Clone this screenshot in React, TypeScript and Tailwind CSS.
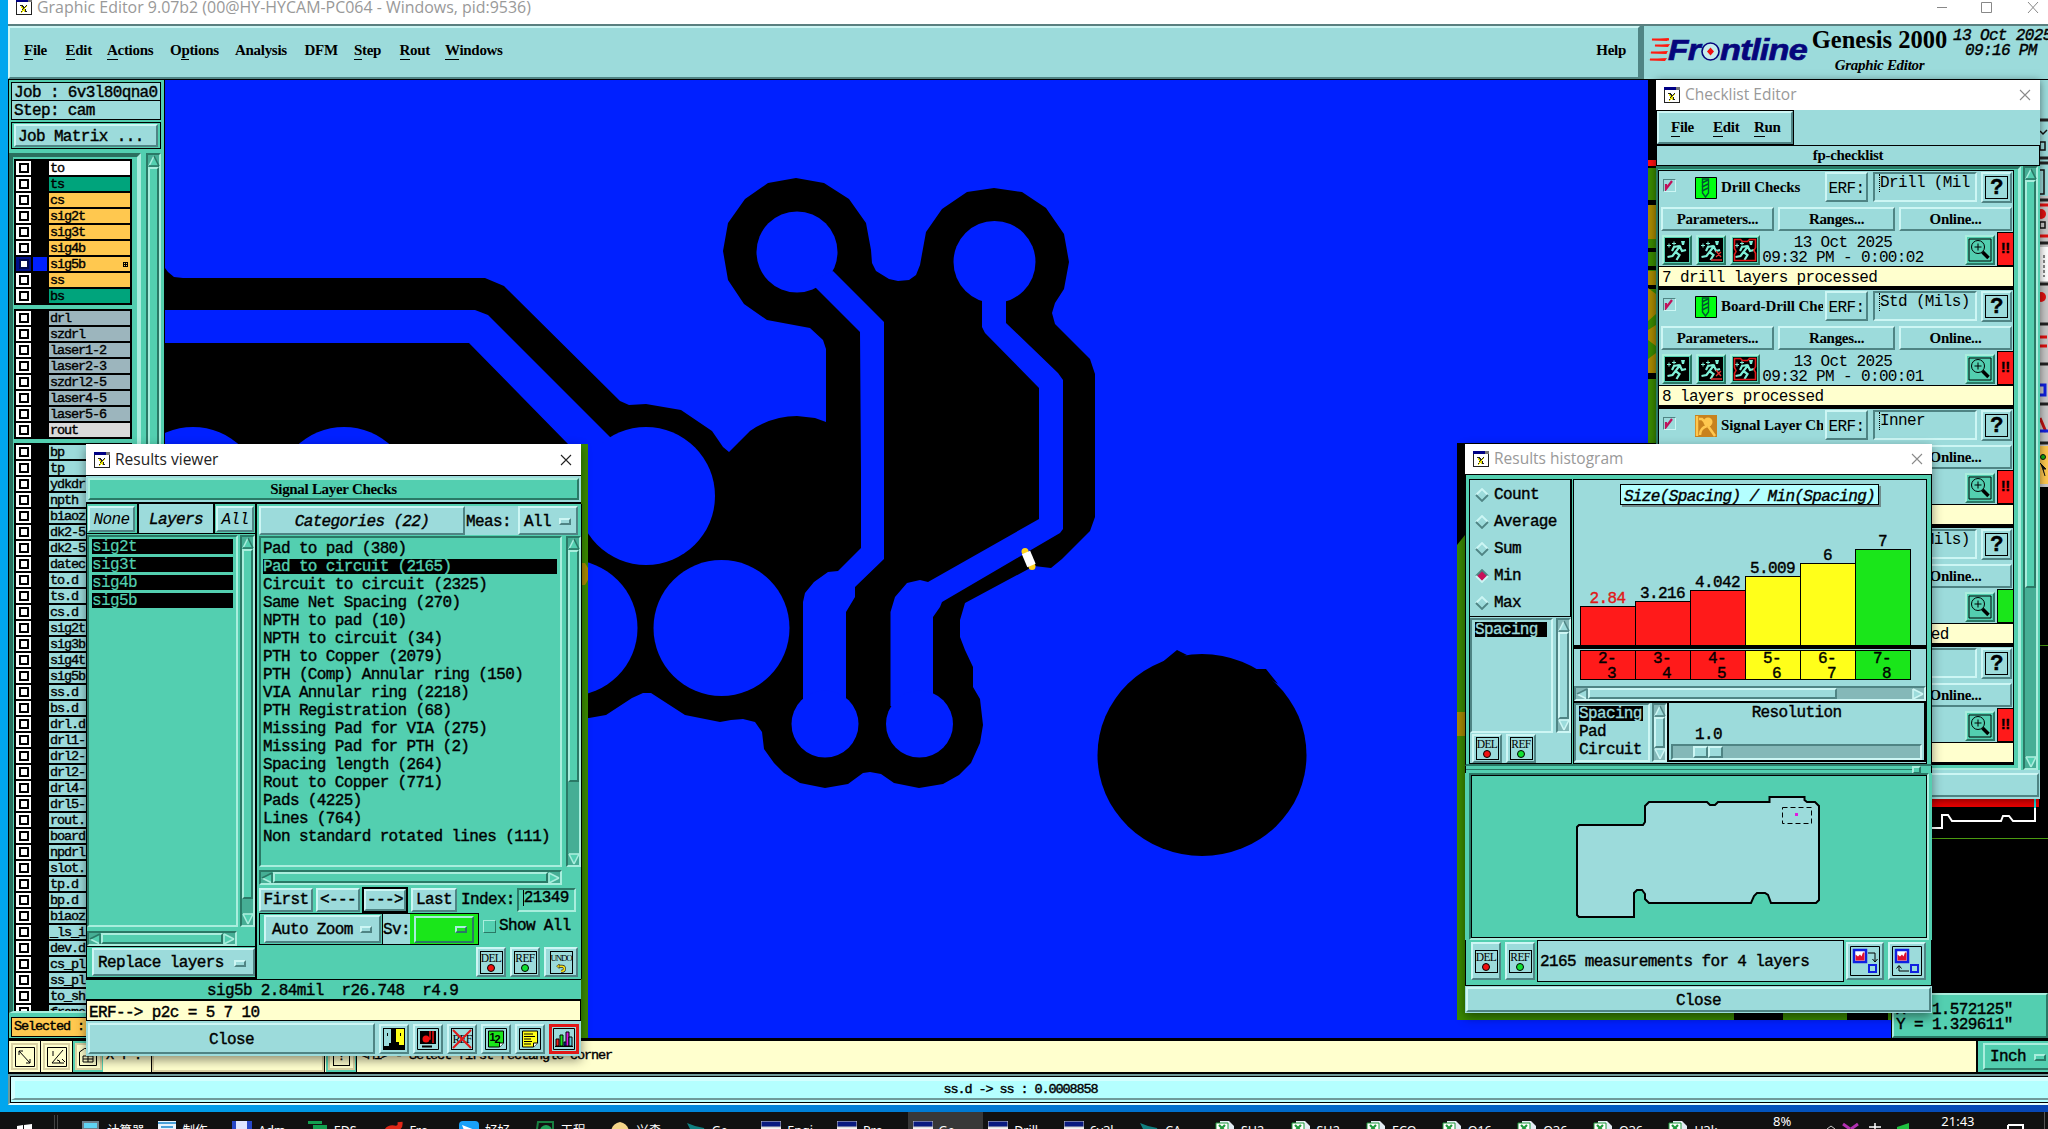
import type { ReactNode } from "react";
import clsx from "clsx";

const SERIF = "font-['Liberation_Serif',serif] font-bold text-[15px] tracking-[-0.3px] [-webkit-text-stroke:0]";
const THIN = "font-normal [-webkit-text-stroke:0]";
const UI = "font-['Open_Sans','Noto_Sans',sans-serif] font-normal tracking-normal [-webkit-text-stroke:0]";
const SMALL = "text-[13.5px] tracking-[-1.1px]";

// Motif style bevels, aqua and teal flavours
const UP = "border-2 border-t-[#cdf6f4] border-l-[#cdf6f4] border-b-[#4f8484] border-r-[#4f8484] bg-[#9cdbdb]";
const DOWN = "border-2 border-b-[#cdf6f4] border-r-[#cdf6f4] border-t-[#4f8484] border-l-[#4f8484] bg-[#9cdbdb]";
const TUP = "border-2 border-t-[#a9eedd] border-l-[#a9eedd] border-b-[#2a7966] border-r-[#2a7966] bg-[#53cfb0]";
const TDOWN = "border-2 border-b-[#a9eedd] border-r-[#a9eedd] border-t-[#2a7966] border-l-[#2a7966] bg-[#53cfb0]";

type Layer = { name: string; color: string; active?: boolean };

const boardLayers: Layer[] = [
  { name: "to", color: "bg-white" },
  { name: "ts", color: "bg-[#00a47c]" },
  { name: "cs", color: "bg-[#ffc84f]" },
  { name: "sig2t", color: "bg-[#ffc84f]" },
  { name: "sig3t", color: "bg-[#ffc84f]" },
  { name: "sig4b", color: "bg-[#ffc84f]" },
  { name: "sig5b", color: "bg-[#ffc84f]", active: true },
  { name: "ss", color: "bg-[#ffc84f]" },
  { name: "bs", color: "bg-[#00a47c]" },
];

const drillLayers: Layer[] = [
  ...["drl", "szdrl", "laser1-2", "laser2-3", "szdrl2-5", "laser4-5", "laser5-6"].map((name) => ({
    name,
    color: "bg-[#9cb5bd]",
  })),
  { name: "rout", color: "bg-[#dadada]" },
];

const miscLayers: Layer[] = [
  "bp", "tp", "ydkdr", "npth", "biaoz", "dk2-5", "dk2-5", "datec", "to.d", "ts.d", "cs.d", "sig2t",
  "sig3b", "sig4t", "sig5b", "ss.d", "bs.d", "drl.d", "drl1-", "drl2-", "drl2-", "drl4-", "drl5-",
  "rout.", "board", "npdrl", "slot.", "tp.d", "bp.d", "biaoz", "_ls_i", "dev.d", "cs_pl", "ss_pl",
  "to_sh", "frame",
].map((name) => ({ name, color: "bg-[#9cdbdb]" }));

const categories = [
  "Pad to pad (380)",
  "Pad to circuit (2165)",
  "Circuit to circuit (2325)",
  "Same Net Spacing (270)",
  "NPTH to pad (10)",
  "NPTH to circuit (34)",
  "PTH to Copper (2079)",
  "PTH (Comp) Annular ring (150)",
  "VIA Annular ring (2218)",
  "PTH Registration (68)",
  "Missing Pad for VIA (275)",
  "Missing Pad for PTH (2)",
  "Spacing length (264)",
  "Rout to Copper (771)",
  "Pads (4225)",
  "Lines (764)",
  "Non standard rotated lines (111)",
];

const checks = [
  { title: "Drill Checks", icon: "drill", erf: "Drill (Mil", time: "09:32 PM - 0:00:02", msg: "7 drill layers processed", flag: "red" },
  { title: "Board-Drill Checks", icon: "drill", erf: "Std (Mils)", time: "09:32 PM - 0:00:01", msg: "8 layers processed", flag: "red" },
  { title: "Signal Layer Checks", icon: "signal", erf: "Inner", time: "", msg: "", flag: "red" },
  { title: "", icon: "signal", erf: "Std (Mils)", time: "", msg: "processed", flag: "green" },
  { title: "", icon: "signal", erf: "", time: "", msg: "", flag: "red" },
];

const bars = [
  { value: "2.84", h: 39, from: "2-", to: "3", color: "bg-[#ff1a1a]" },
  { value: "3.216", h: 44, from: "3-", to: "4", color: "bg-[#ff1a1a]" },
  { value: "4.042", h: 55, from: "4-", to: "5", color: "bg-[#ff1a1a]" },
  { value: "5.009", h: 69, from: "5-", to: "6", color: "bg-[#ffff1a]" },
  { value: "6", h: 82, from: "6-", to: "7", color: "bg-[#ffff1a]" },
  { value: "7", h: 96, from: "7-", to: "8", color: "bg-[#1ae61a]" },
];

const tasks = [
  { label: "计算器", icon: "calc" },
  { label: "制作", icon: "note" },
  { label: "Adm", icon: "disk" },
  { label: "EDS", icon: "green" },
  { label: "Fro", icon: "red" },
  { label: "好好", icon: "bird" },
  { label: "工程", icon: "globe" },
  { label: "兴森", icon: "shell" },
  { label: "Ge", icon: "teal" },
  { label: "Engi", icon: "win" },
  { label: "Pro", icon: "win" },
  { label: "Ge", icon: "win", active: true },
  { label: "Drill", icon: "win" },
  { label: "6v3l", icon: "win" },
  { label: "CA", icon: "teal" },
  { label: "SH2", icon: "xls" },
  { label: "SH2", icon: "xls" },
  { label: "ECO", icon: "xls" },
  { label: "O16", icon: "xls" },
  { label: "O36", icon: "xls" },
  { label: "O36", icon: "xls" },
  { label: "U3k", icon: "xls" },
];

function AppIcon() {
  return (
    <svg width="16" height="16" viewBox="0 0 16 16" shapeRendering="crispEdges" className="shrink-0">
      <rect x=".5" y=".5" width="15" height="15" fill="#fff" stroke="#222" />
      <rect x="0" y="0" width="12" height="3" fill="#000084" />
      <rect x="12" y="0" width="4" height="3" fill="#777" />
      <path d="M5 6l5 7" stroke="#222" strokeWidth="2.5" />
      <path d="M11 6l-6 7" stroke="#222" strokeWidth="1" />
      <path d="M11 7l-6 7M5 7l4 6" stroke="#e6e000" strokeWidth="1" />
    </svg>
  );
}

function CloseX({ color }: { color: string }) {
  return (
    <svg width="12" height="12" viewBox="0 0 12 12" className="shrink-0">
      <path d="M1 1l10 10M11 1L1 11" stroke={color} strokeWidth="1.1" />
    </svg>
  );
}

function Arrow({ dir, aqua }: { dir: "up" | "down" | "left" | "right"; aqua?: boolean }) {
  const rot = { up: 0, right: 90, down: 180, left: 270 }[dir];
  const light = aqua ? "#cdf6f4" : "#a9eedd";
  const dark = aqua ? "#4f8484" : "#2a7966";
  const lit = dir === "up" || dir === "left";
  return (
    <svg width="12" height="12" viewBox="0 0 12 12" className="shrink-0">
      <g transform={`rotate(${rot} 6 6)`}>
        <path d="M6 1L11 11H1z" fill={aqua ? "#9cdbdb" : "#53cfb0"} />
        <path d="M6 1L1 11" stroke={light} strokeWidth="1.6" />
        <path d="M6 1L11 11" stroke={lit ? dark : light} strokeWidth="1.6" />
        <path d="M1 11H11" stroke={lit ? dark : light} strokeWidth="1.6" />
      </g>
    </svg>
  );
}

function VScroll({ className, thumb, aqua }: { className?: string; thumb: string; aqua?: boolean }) {
  return (
    <div
      className={clsx(
        "flex w-[15px] shrink-0 flex-col items-center",
        className,
        aqua ? DOWN : TDOWN,
        aqua ? "!bg-[#84b8b8]" : "!bg-[#46ae95]"
      )}
    >
      <Arrow dir="up" aqua={aqua} />
      <div className={clsx("w-full", thumb, aqua ? UP : TUP)} />
      <div className="mt-auto flex">
        <Arrow dir="down" aqua={aqua} />
      </div>
    </div>
  );
}

function HScroll({ className, thumb, aqua }: { className: string; thumb: string; aqua?: boolean }) {
  return (
    <div
      className={clsx(
        "flex h-[15px] shrink-0 items-center",
        className,
        aqua ? DOWN : TDOWN,
        aqua ? "!bg-[#84b8b8]" : "!bg-[#46ae95]"
      )}
    >
      <Arrow dir="left" aqua={aqua} />
      <div className={clsx("h-full", thumb, aqua ? UP : TUP)} />
      <div className="ml-auto flex">
        <Arrow dir="right" aqua={aqua} />
      </div>
    </div>
  );
}

function Button({ children, className }: { children?: ReactNode; className?: string }) {
  return <div className={clsx("flex shrink-0 items-center justify-center", UP, className)}>{children}</div>;
}

// Small raised bar that marks an option menu
function OptionMark({ teal, green }: { teal?: boolean; green?: boolean }) {
  return <div className={clsx("h-[7px] w-[12px]", teal || green ? TUP : UP, green && "!bg-[#1ae61a]")} />;
}

function BadgeButton({ label, className }: { label: "DEL" | "REF" | "UNDO"; className?: string }) {
  return (
    <Button className={className}>
      <div className="flex h-[23px] w-[23px] flex-col items-center overflow-hidden border border-black">
        <span
          className={clsx(
            "font-['Liberation_Serif',serif]",
            THIN,
            label === "UNDO" ? "text-[9px] leading-[12px] tracking-[-1.2px]" : "text-[11.5px] leading-[12px] tracking-[-0.6px]"
          )}
        >
          {label}
        </span>
        {label === "UNDO" ? (
          <svg width="11" height="10" viewBox="0 0 11 10">
            <path d="M2 2.5h4a2.5 2.5 0 010 5.500h-1" fill="none" stroke="#222" strokeWidth="3.2" />
            <path d="M2 2.500h4a2.500 2.500 0 010 5.500h-1" fill="none" stroke="#f7e31a" strokeWidth="1.8" />
            <path d="M0 2.500l3-2.500v5z" fill="#f7e31a" stroke="#222" strokeWidth=".6" />
          </svg>
        ) : (
          <span
            className={clsx("h-[8px] w-[8px] rounded-full border border-black", label === "DEL" ? "bg-[#f01010]" : "bg-[#10e030]")}
          />
        )}
      </div>
    </Button>
  );
}

function MenuItem({ text, mark = 0, className }: { text: string; mark?: number; className?: string }) {
  return (
    <span className={className}>
      {mark >= 0 ? (
        <>
          {text.slice(0, mark)}
          <span className="border-b border-black pb-[1px]">{text[mark]}</span>
          {text.slice(mark + 1)}
        </>
      ) : (
        text
      )}
    </span>
  );
}

function LayerGroup({ layers }: { layers: Layer[] }) {
  return (
    <div className="flex shrink-0 flex-col gap-[2px] border-2 border-black bg-black">
      {layers.map((l, i) => (
        <div key={i} className="flex h-[14px] items-center">
          <div className={clsx("flex h-[14px] w-[15px] items-center justify-center", l.active ? "bg-[#00108c]" : "bg-white")}>
            <div className={clsx("h-[10px] w-[10px] border-2 bg-white", l.active ? "border-[#000a50]" : "border-black")} />
          </div>
          <div className={clsx("ml-[2px] h-[14px] w-[14px]", l.active ? "bg-[#0020ff]" : "bg-black")} />
          <div className={clsx("ml-[2px] flex h-[14px] w-[81px] items-center overflow-hidden pt-[1px] pl-[1px] leading-[14px]", SMALL, l.color)}>
            {l.name}
            {l.active && (
              <svg width="6" height="6" viewBox="0 0 6 6" shapeRendering="crispEdges" className="mr-[1px] ml-auto">
                <path d="M.5.5h4v4h-4zM2.500 0v5M0 2.500h5" fill="none" stroke="#000" strokeWidth="1" />
              </svg>
            )}
          </div>
        </div>
      ))}
    </div>
  );
}

function LayerPanel() {
  return (
    <div className="flex w-[157px] shrink-0 flex-col border-x border-black bg-[#53cfb0] pt-[2px] pr-[1px] pl-[2px]">
      <div className="flex h-[19px] w-[150px] items-center border border-black bg-[#9cdbdb] pt-[2px] pl-[2px]">Job : 6v3l80qna0</div>
      <div className="flex h-[19px] w-[150px] items-center border border-t-0 border-black bg-[#9cdbdb] pt-[2px] pl-[2px]">Step: cam</div>
      <div className="mt-[2px] flex h-[27px] w-[150px] items-center justify-center border border-black">
        <Button className="h-[23px] w-[144px] !justify-start pt-[2px] pl-[2px]">Job Matrix ...</Button>
      </div>
      <div className="mt-[4px] flex h-[860px]">
        <div className="-ml-[2px] flex h-full w-[132px] border-2 border-t-4 border-r-4 border-l-4 border-t-[#2a6f5e] border-r-[#a9eedd] border-b-[#a9eedd] border-l-[#2a6f5e] bg-[#53cfb0] pt-[2px]">
          <div className="flex h-full w-[119px] flex-col gap-[4px] overflow-hidden pl-[1px]">
            <LayerGroup layers={boardLayers} />
            <LayerGroup layers={drillLayers} />
            <LayerGroup layers={miscLayers} />
          </div>
        </div>
        <VScroll className="ml-[5px] h-full" thumb="h-[700px]" />
      </div>
      <div className="mt-[4px] flex h-[20px] items-center border border-black bg-[#ffc84f] pl-[2px]">
        <span className={SMALL}>Selected :</span>
      </div>
    </div>
  );
}

function Board() {
  return (
    <svg width="1883" height="958" viewBox="165 80 1883 958" className="block">
      <rect x="165" y="80" width="1883" height="958" fill="#0020ff" />
      {/* clearance around nets */}
      <path
        fill="#000"
        d="M165 268L168 272L174 277L183 278H485L504 286L620 401L629 405L646 404L681 410L712 431L723 447L729 452L739 442L750 431Q772 416 797 416L815 418L826 422V349L823 340L810 328L767 320L744 304L728 280L723 251L728 223L745 199L768 183L796 178L824 183L849 199L866 223L871 250L872 263L876 271L889 279L898 281L909 280L916 275L920 265L926 232L942 209L967 192L994 188L1022 192L1046 208L1064 234L1069 262L1064 289L1055 303L1052 313L1055 324L1090 359L1095 374V517L1090 531L1062 559L1051 568L1034 566L965 603L960 620V637L965 650L973 667V687L980 699L983 725L980 743L971 763L959 775L943 784L919 788L894 783L881 774L870 772L863 773L848 784L825 788L800 783L784 773L774 763L764 749L762 732L755 722L743 719L731 720L720 722L685 715L651 693H643L632 698L606 715L589 718H165z"
      />
      <g fill="#0020ff">
        <path d="M165 310H475L488 315L610 437L640 470L620 500L568 444L469 343H165z" />
        <circle cx="193" cy="496" r="69" />
        <circle cx="344" cy="496" r="69" />
        <circle cx="646" cy="496" r="69" />
        <circle cx="721.5" cy="628" r="68" />
        <circle cx="569.5" cy="628" r="68" />
        <circle cx="797" cy="252" r="40.500" />
        <path d="M833 271L884 322V559L855 587V597L846 612V700H803V602L805 593L814 582L828 572L838 571L861 548V474L860 332L810 282z" />
        <circle cx="825" cy="724" r="33.500" />
        <circle cx="994.500" cy="262" r="41" />
        <path d="M982 295V327L985 333L1039 388V519L928 582L920 580L907 583L895 597L890.500 612V706H933V617L940 607L942 602L1060 533L1063 529V380L1058 373L1006 323V295z" />
        <circle cx="919.500" cy="724" r="33.500" />
      </g>
      <ellipse cx="1202" cy="755" rx="104.500" ry="101" fill="#000" />
      <path d="M1160 664L1177 650L1187 655zM1240 662L1252 669H1266L1278 684z" fill="#000" />
      <circle cx="1025" cy="551.500" r="3.500" fill="#ffd21a" />
      <circle cx="1032" cy="566.500" r="3.500" fill="#ffd21a" />
      <path d="M1026 552.500L1031.500 565.500" stroke="#fff" strokeWidth="9" />

      {/* uncovered pixels left behind the windows */}
      <path d="M581 444h7v594h-7z" fill="#3a8a00" />
      <path d="M581 563h4l3 5v12l-3 5h-4z" fill="#a88a00" />
      <path d="M1457 443h480v577h-480z" fill="#3a8a00" />
      <path d="M1457 443h480v20h-472v72l-8 10z" fill="#000" />
      <path d="M1457 712h8v24h-8z" fill="#a88a00" />
      <path d="M1734 1013h49v7h-49zM1847 1013h41v7h-41z" fill="#000" />

      {/* overview strip */}
      <path d="M1648 80h400v363h-400z" fill="#000" />
      <path d="M1891 443h157v595h-157z" fill="#000" />
      <path d="M1648 168h8v275h-8z" fill="#3a8a00" />
      <path d="M1648 160h8v6h-8z" fill="#ff1010" />
      <path d="M1648 200h8v5h-8zM1648 248h8v4h-8zM1648 266h8v4h-8zM1648 285h8v4h-8zM1648 373h8v6h-8z" fill="#000" />
      <path d="M1648 205h8v34h-8zM1648 271h8v14h-8zM1648 288l8 6v20l-8 7zM1656 325v21l-8-6v-10zM1656 353v20h-8v-14z" fill="#a88a00" />
      <path d="M1891 799h148v8h-148z" fill="#e60000" />
      <path d="M2035 799v12" stroke="#1ad0d0" strokeWidth="2" />
      <path d="M1925 828h17v-13h6l4 6h49l2-5h6l4 5h22v-13" fill="none" stroke="#fff" strokeWidth="2" />
      <path d="M1925 838.500h123M2039 645.500h9" stroke="#4a9a10" />
      {/* edge of the tool palette */}
      <path d="M2039 80h9v407h-9z" fill="#c8c8c8" />
      <path d="M2039 80h9v116h-9z" fill="#9cdbdb" />
      <path d="M2039 120h9M2039 158h9M2039 163h9M2039 200h9M2039 243h9M2039 284h9M2039 324h9M2039 364h9M2039 404h9M2039 443h9" stroke="#222" strokeWidth="3" />
      <path d="M2039 205h9M2039 236h9" stroke="#e01010" strokeWidth="3" />
      <path d="M2040 142h5v8h-5zM2040 131l3 3l4-4M2040 170h4v24h-4M2040 222h5v6h-5z" fill="none" stroke="#111" strokeWidth="1.500" />
      <circle cx="2041" cy="214" r="5" fill="#e01010" />
      <path d="M2040 247h8v34h-8z" fill="#fff" />
      <path d="M2044 255v22" stroke="#111" strokeDasharray="3 2" />
      <circle cx="2041" cy="297" r="5" fill="#e01010" />
      <path d="M2040 337h7M2040 346h7" stroke="#e01010" strokeWidth="3" />
      <path d="M2040 385h5v10h-5" fill="none" stroke="#1020e0" strokeWidth="3" />
      <path d="M2040 418l6 14" stroke="#c01010" strokeWidth="3" />
      <path d="M2040 431h8" stroke="#1020e0" strokeWidth="3" />
      <path d="M2039 446h9v38h-9z" fill="#ffc84f" />
      <circle cx="2043" cy="457" r="2.500" fill="#10b010" stroke="#111" />
      <path d="M2040 463l6 6h-3l2 7" fill="#111" stroke="#111" />
    </svg>
  );
}

function Frontline() {
  return (
    <svg width="166" height="34" viewBox="1645 36 166 34" className="shrink-0">
      <path d="M1652 42l18-2l-2 3zM1655 48l16-2l-2 3zM1650 55l19-2l-2 3zM1649 62l19-2l-2 3z" fill="#ff1a10" />
      <path d="M1653 41.500h17M1656 47.500h13M1652 54.500h16M1651 61.500h15" stroke="#ff1a10" strokeWidth="2" />
      <g fontFamily="Liberation Sans, sans-serif" fontWeight="bold" fontStyle="italic" fontSize="30" fill="#06067c" stroke="#06067c" strokeWidth=".7">
        <text x="1669" y="62" textLength="32" lengthAdjust="spacingAndGlyphs">
          Fr
        </text>
        <text x="1721" y="62" textLength="87" lengthAdjust="spacingAndGlyphs">
          ntline
        </text>
      </g>
      <circle cx="1711.500" cy="53.500" r="8.500" fill="#c6ecec" stroke="#06067c" strokeWidth="1.600" />
      <path d="M1711.500 49.500l3.500 4l-3.500 4l-3.500-4z" fill="#f01010" />
    </svg>
  );
}

function Header() {
  return (
    <>
      <div className="flex h-[24px] shrink-0 items-start bg-white pl-[8px] text-[#999]">
        <div className="flex h-[15px] items-end overflow-hidden">
          <AppIcon />
        </div>
        <span className={clsx("ml-[5px] text-[15.95px] leading-[15px] whitespace-nowrap", UI)}>
          Graphic Editor 9.07b2 (00@HY-HYCAM-PC064 - Windows, pid:9536)
        </span>
        <svg width="110" height="16" viewBox="0 0 110 16" className="mr-[4px] ml-auto">
          <path d="M3 7.500h10M47.500 2.500h10v10h-10zM94 2l10 11M104 2L94 13" fill="none" stroke="#888" />
        </svg>
      </div>
      <div className="flex h-[56px] shrink-0 border-t-2 border-b border-t-[#5a7f7f] border-b-black bg-[#9cdbdb]">
        <div
          className={clsx(
            "flex w-[1632px] items-center border-2 border-t-[#cdf6f4] border-r-[#4f8484] border-b-[#4f8484] border-l-[#cdf6f4] pr-[12px] pb-[4px] pl-[14px]",
            SERIF
          )}
        >
          <MenuItem text="File" className="w-[41.500px]" />
          <MenuItem text="Edit" className="w-[41.500px]" />
          <MenuItem text="Actions" className="w-[63px]" />
          <MenuItem text="Options" mark={1} className="w-[65px]" />
          <MenuItem text="Analysis" mark={-1} className="w-[69.500px]" />
          <MenuItem text="DFM" mark={-1} className="w-[49.500px]" />
          <MenuItem text="Step" className="w-[45.500px]" />
          <MenuItem text="Rout" className="w-[45.500px]" />
          <MenuItem text="Windows" />
          <MenuItem text="Help" mark={-1} className="ml-auto" />
        </div>
        <div className="flex flex-1 overflow-hidden border-l-4 border-l-[#4f8484] pt-[8px]">
          <Frontline />
          <div className={clsx("-mt-[8px] ml-[1px] flex w-[137px] shrink-0 flex-col items-center", SERIF)}>
            <span className="text-[24.500px] leading-[28px] tracking-normal whitespace-nowrap">Genesis 2000</span>
            <span className="mt-[1px] leading-[20px] italic">Graphic Editor</span>
          </div>
          <div className="-mt-[7px] ml-[5px] flex shrink-0 flex-col leading-[15px] whitespace-pre italic">
            <span className="mt-[2px]">13 Oct 2025</span>
            <span className="ml-[12px]">09:16 PM</span>
          </div>
        </div>
      </div>
    </>
  );
}

function CommandBar() {
  const inner = "flex h-[27px] w-[27px] items-center justify-center border-2 border-[#d9d2a4] bg-[#ffffce]";
  return (
    <div className="flex h-[31px] shrink-0 bg-[#ffffce]">
      <div className="flex w-[33px] items-center justify-center border-x border-black">
        <div className={inner}>
          <svg width="20" height="20" viewBox="0 0 20 20">
            <path d="M.5.500h19v19H.500zM4 4l11 12M4 8V4h4M15 12v4h-4" fill="none" stroke="#000" />
          </svg>
        </div>
      </div>
      <div className="flex w-[32px] items-center justify-center border-r border-black">
        <div className={inner}>
          <svg width="20" height="20" viewBox="0 0 20 20">
            <path d="M.5.500h19v19H.500zM16 3L5 16h12M6 4v5M10 13q3 0 3 3M15 12l3 3" fill="none" stroke="#000" />
          </svg>
        </div>
      </div>
      <div className="flex w-[30px] items-center justify-center bg-[#53cfb0]">
        <div className={inner}>
          <svg width="18" height="18" viewBox="0 0 18 18">
            <path d="M.5 17.500V4l5-3.500h12v17zM4 14V8h10v6zM9 8v6M4 11h10" fill="none" stroke="#000" />
          </svg>
        </div>
      </div>
      <div className={clsx("flex w-[49px] items-center pl-[3px] whitespace-pre", SMALL)}>X Y :</div>
      <div className="w-[172px] border-2 border-[#d9d2a4] bg-[#ffffce] outline outline-black" />
      <div className="ml-[2px] flex w-[30px] items-center justify-center bg-[#53cfb0]">
        <div className={inner}>
          <span className="flex h-[19px] w-[17px] items-center justify-center border border-black text-[13px]">!</span>
        </div>
      </div>
      <div className={clsx("flex flex-1 items-center border-l border-black pl-[3px]", SMALL)}>
        &lt;M1&gt; - Select first rectangle corner
      </div>
      <div className="flex w-[72px] items-center overflow-hidden border-l-2 border-black bg-[#53cfb0] pl-[5px]">
        <div className={clsx("flex h-[27px] w-[84px] shrink-0 items-center pt-[1px] pl-[5px]", TUP)}>
          Inch
          <span className="ml-[8px]">
            <OptionMark teal />
          </span>
        </div>
      </div>
    </div>
  );
}

function TitleBar({ title, active, className }: { title: string; active?: boolean; className?: string }) {
  return (
    <div className={clsx("flex shrink-0 items-center bg-white pr-[9px] pl-[8px]", className)}>
      <AppIcon />
      <span className={clsx("ml-[5px] pb-[2px] text-[15.500px] leading-[20px]", UI, active ? "text-[#222]" : "text-[#999]")}>{title}</span>
      <span className="ml-auto flex">
        <CloseX color={active ? "#222" : "#8a8a8a"} />
      </span>
    </div>
  );
}

function ResultsViewer() {
  const tool = "h-[30px] w-[30px]";
  return (
    <div className="absolute top-[444px] left-[86px] flex h-[612px] w-[495px] flex-col bg-[#9cdbdb] shadow-[0_4px_10px_rgba(0,0,0,0.45)]">
      <TitleBar title="Results viewer" active className="h-[31px]" />
      <div className={clsx("flex h-[29px] shrink-0 items-center justify-center border-t border-b-2 border-black p-[2px]", SERIF)}>
        <div className={clsx("flex h-full w-full items-center justify-center", TUP)}>Signal Layer Checks</div>
      </div>

      <div className="flex h-[475px] shrink-0 bg-[#53cfb0]">
        <div className="flex w-[171px] shrink-0 flex-col border-r-2 border-l border-black">
          <div className="flex h-[30px] items-center border-b border-black pl-[1px]">
            <Button className={clsx("mr-[2px] h-[26px] w-[47px] pt-[3px] italic", THIN)}>None</Button>
            <div className="flex h-full w-[78px] items-center justify-center border-x-2 border-black bg-[#9cdbdb] pt-[3px] italic">Layers</div>
            <Button className={clsx("ml-[1px] h-[26px] w-[38px] pt-[3px] italic", THIN)}>All</Button>
          </div>
          <div className="flex h-[393px] pt-[1px]">
            <div className={clsx("flex w-[151px] flex-col gap-[3px] pt-[2px] pr-[3px] pl-[3px]", TDOWN)}>
              {["sig2t", "sig3t", "sig4b", "sig5b"].map((n) => (
                <div key={n} className="h-[15px] bg-black leading-[16px] text-[#53cfb0] [-webkit-text-stroke:0.2px]">
                  {n}
                </div>
              ))}
            </div>
            <VScroll className="ml-[2px]" thumb="h-[350px]" />
          </div>
          <HScroll className="mt-[4px] w-[150px]" thumb="w-[122px]" />
          <div className="mt-auto flex h-[33px] items-center justify-end border-y-2 border-t border-black">
            <div className={clsx("flex h-[28px] w-[163px] items-center justify-between pt-[2px] pr-[7px] pl-[4px]", UP)}>
              Replace layers
              <OptionMark />
            </div>
          </div>
        </div>

        <div className="flex flex-1 flex-col border-r border-black pl-[2px]">
          <div className="flex h-[32px] items-center">
            <Button className="h-[29px] w-[206px] pt-[3px] italic">Categories (22)</Button>
            <div className="flex h-[29px] w-[53px] items-center bg-[#9cdbdb] pt-[3px] pl-[1px]">Meas:</div>
            <div className={clsx("flex h-[29px] w-[60px] items-center justify-between pt-[3px] pr-[5px] pl-[4px]", UP)}>
              All
              <OptionMark />
            </div>
          </div>
          <div className="flex h-[331px] gap-[4px]">
            <div className={clsx("flex w-[303px] flex-col pt-[1px] pl-[2px]", TDOWN)}>
              {categories.map((c, i) => (
                <div key={c} className="flex h-[18px] w-[294px] shrink-0 items-center whitespace-nowrap">
                  <span className={clsx("flex h-[15px] w-full items-center pt-[2px] leading-[16px]", i === 1 && "bg-black text-[#53cfb0]")}>{c}</span>
                </div>
              ))}
            </div>
            <VScroll thumb="h-[232px]" />
          </div>
          <HScroll className="mt-[3px] w-[303px]" thumb="w-[275px]" />
          <div className="mt-[2px] flex h-[26px] items-center">
            <Button className="h-[24px] w-[54px]">First</Button>
            <Button className="ml-[3px] h-[24px] w-[44px]">&lt;---</Button>
            <div className="ml-[2px] border-2 border-black">
              <Button className="h-[22px] w-[42px]">---&gt;</Button>
            </div>
            <Button className="ml-[3px] h-[24px] w-[46px]">Last</Button>
            <span className="ml-[4px]">Index:</span>
            <div className={clsx("ml-[2px] flex h-[24px] w-[59px] items-center pb-[4px] pl-[4px]", TDOWN)}>
              <span className="border-l border-black leading-[16px]">21349</span>
            </div>
          </div>
          <div className="flex h-[33px] items-start">
            <div className="flex h-[32px] w-[124px] items-center border border-black pl-[4px]">
              <div className={clsx("flex h-[28px] w-[117px] items-center justify-between pt-[1px] pr-[7px] pl-[6px]", UP)}>
                Auto Zoom
                <OptionMark />
              </div>
            </div>
            <div className="flex h-[32px] w-[27px] items-center border-y border-black bg-[#9cdbdb] pt-[2px]">Sv:</div>
            <div className="flex h-[32px] w-[69px] items-center justify-center border-y border-r border-black bg-[#1ae61a]">
              <div className="flex h-[27px] w-[60px] items-center justify-end border-2 border-t-[#a9eedd] border-r-[#2a7966] border-b-[#2a7966] border-l-[#a9eedd] pr-[5px]">
                <OptionMark green />
              </div>
            </div>
            <div className={clsx("mt-[7px] ml-[4px] h-[13px] w-[13px]", TUP, "!border")} />
            <span className="mt-[5px] ml-[3px] leading-[17px]">Show All</span>
          </div>
          <div className="mt-[1px] flex h-[32px] justify-end gap-[4px] pr-[3px]">
            <BadgeButton label="DEL" className="h-[30px] w-[30px]" />
            <BadgeButton label="REF" className="h-[30px] w-[30px]" />
            <BadgeButton label="UNDO" className="h-[30px] w-[34px]" />
          </div>
        </div>
      </div>

      <div className="flex h-[22px] shrink-0 items-center border-y-2 border-t border-black bg-[#53cfb0] pt-[3px] pl-[121px] leading-[16px] whitespace-pre">
        {"sig5b 2.84mil  r26.748  r4.9"}
      </div>
      <div className="flex h-[20px] shrink-0 items-center border border-t-0 border-black bg-[#ffffce] pt-[4px] pl-[2px] leading-[16px] whitespace-pre">
        {"ERF--> p2c = 5 7 10"}
      </div>
      <div className="flex flex-1 items-center pl-[2px]">
        <Button className="h-[31px] w-[287px] pt-[2px]">Close</Button>
        <div className="ml-[4px] flex gap-[4px]">
          <Button className={tool}>
            <svg width="22" height="22" viewBox="0 0 22 22" shapeRendering="crispEdges">
              <path d="M0 0h22v22H0z" fill="#000" />
              <path d="M1 1h7v14h-2v3H1z" fill="#9cdbdb" />
              <path d="M13 1h8v16h-5v-3h-3z" fill="#ffff1a" />
              <path d="M4 5h1v3H4zM17 5h1v3h-1z" fill="#000" />
            </svg>
          </Button>
          <Button className={tool}>
            <svg width="22" height="22" viewBox="0 0 22 22">
              <path d="M.5.500h21v21H.500z" fill="#9cdbdb" stroke="#000" />
              <path d="M3 3h16v13H3z" fill="#000" />
              <circle cx="9" cy="11" r="3.500" fill="#f01010" />
              <path d="M9 11h4V3M16 3v12" stroke="#f01010" strokeWidth="1.500" fill="none" />
              <path d="M5 18.500h10" stroke="#000" strokeWidth="2" />
            </svg>
          </Button>
          <Button className={tool}>
            <div className="relative flex h-[22px] w-[22px] items-center justify-center border border-black">
              <span className={clsx("font-['Liberation_Serif',serif] text-[12px] tracking-[-1px]", THIN)}>REF</span>
              <svg width="22" height="22" viewBox="0 0 22 22" className="absolute -top-px -left-px">
                <path d="M2 2l18 18M20 2L2 20" stroke="#e01818" strokeWidth="2" />
              </svg>
            </div>
          </Button>
          <Button className={tool}>
            <svg width="22" height="22" viewBox="0 0 22 22">
              <path d="M.5.500h21v21H.500z" fill="#9cdbdb" stroke="#000" />
              <path d="M3.500 3h15v12l-4 4h-11z" fill="#1ae61a" stroke="#000" />
              <path d="M14.500 19v-4h4" fill="#fff" stroke="#000" />
              <g fontSize="11" fontWeight="bold" fontFamily="Liberation Sans, sans-serif">
                <text x="4.500" y="12.500">1</text>
                <text x="9.500" y="15">2</text>
              </g>
            </svg>
          </Button>
          <Button className={tool}>
            <svg width="22" height="22" viewBox="0 0 22 22">
              <path d="M.5.500h21v21H.500z" fill="#9cdbdb" stroke="#000" />
              <path d="M3.500 3h15v12l-4 4h-11z" fill="#ffff1a" stroke="#000" />
              <path d="M14.500 19v-4h4" fill="#fff" stroke="#000" />
              <path d="M5 6h9M5 8.500h11M5 11h7M5 13.500h8M5 16h7" stroke="#000" />
            </svg>
          </Button>
          <Button className={clsx(tool, "!border-[3px] !border-[#e01818]")}>
            <svg width="22" height="22" viewBox="0 0 22 22">
              <path d="M.5.500h21v21H.500z" fill="#9cdbdb" stroke="#000" />
              <g stroke="#000">
                <path d="M3 11h3v7H3z" fill="#f02020" />
                <path d="M7 7h3v11H7z" fill="#1ae61a" />
                <path d="M11 14h3v4h-3z" fill="#1020e0" />
                <path d="M13 4h3v14h-3z" fill="#e01ae0" />
                <path d="M16 9h3v9h-3z" fill="#5ad0e0" />
                <path d="M2 18.500h18" />
              </g>
            </svg>
          </Button>
        </div>
      </div>
    </div>
  );
}

function DrillIcon() {
  return (
    <svg width="22" height="22" viewBox="0 0 22 22" className="shrink-0">
      <path d="M.5.500h21v21H.500z" fill="#00ff10" stroke="#000" />
      <path d="M7.500 2h6v14l-3 4l-3-4z" fill="none" stroke="#053" strokeWidth="1.400" />
      <path d="M7 6l6-3M7 10l6-3M7 14l6-3" stroke="#053" strokeWidth="1.400" />
    </svg>
  );
}

function SignalIcon() {
  return (
    <svg width="22" height="22" viewBox="0 0 22 22" className="shrink-0">
      <path d="M0 0h22v22H0z" fill="#c8821e" />
      <path d="M2 1v20M5 20q0-7 7-9M13 11l7 10M4 4h3l3 3" stroke="#ffc84f" strokeWidth="2.500" fill="none" />
      <circle cx="13" cy="7" r="4.500" fill="#ffc84f" />
    </svg>
  );
}

function Runner({ kind }: { kind: "plain" | "layer" | "frame" }) {
  return (
    <div className={clsx("flex h-[30px] w-[30px] shrink-0 items-center justify-center", TUP)}>
      <svg width="24" height="24" viewBox="0 0 24 24">
        <path d="M0 0h24v24H0z" fill="#000" />
        <path d="M16 3h4l-1 4h-2z" fill="#7ff0d8" />
        <path d="M15.500 7.500L10.500 14l4 3l-3 5M10.500 14l-3 4l-5 1M14 8l-5 1l-2 4M15 9l2 4l4-1" fill="none" stroke="#7ff0d8" strokeWidth="2.200" />
        <path d="M2 7.500h4M4 5.500v4M7 5.500h4M9 3.500v4" stroke="#7ff0d8" strokeWidth="1" />
        {kind === "layer" && <path d="M17 13l5 6M22 14l-5 5M12 22h11" stroke="#e03030" strokeWidth="1.300" />}
        {kind === "frame" && (
          <path d="M1.500 1.500h6l2 2h5l2-2h6v8l-1.500 3l1.500 3v7H1.500v-6l1.500-3l-1.500-3z" fill="none" stroke="#e01818" strokeWidth="1.600" />
        )}
      </svg>
    </div>
  );
}

function CheckCard({ check }: { check: (typeof checks)[number] }) {
  return (
    <div className="flex h-[119px] w-[356px] shrink-0 flex-col border-x border-t border-black bg-[#9cdbdb]">
      <div className="flex h-[36px] items-start pt-[1px]">
        <div className={clsx("mt-[7px] ml-[4px] h-[13px] w-[13px] shrink-0", DOWN, "!border")}>
          <svg width="11" height="11" viewBox="0 0 11 11">
            <path d="M2 4v5l6-8" fill="none" stroke="#c0105a" strokeWidth="2.200" />
          </svg>
        </div>
        <div className="mt-[5px] ml-[19px]">{check.icon === "drill" ? <DrillIcon /> : <SignalIcon />}</div>
        <span className={clsx("mt-[4px] mr-[2px] ml-[4px] w-[102px] overflow-hidden whitespace-nowrap", SERIF, "!tracking-[-0.1px]")}>
          {check.title}
        </span>
        <Button className={clsx("h-[30px] w-[43px] pt-[3px]", THIN)}>ERF:</Button>
        <div className={clsx("ml-[5px] h-[30px] w-[104px] shrink-0 pl-[4px] leading-[18px]", DOWN, THIN)}>
          {check.erf && <span className="border-l border-dotted border-black">{check.erf}</span>}
        </div>
        <Button className="ml-[4px] h-[31px] w-[31px]">
          <span className="flex h-[23px] w-[23px] items-center justify-center border border-black pt-[2px] text-[22px] font-bold">?</span>
        </Button>
      </div>
      <div className={clsx("flex h-[24px] gap-[4px] pl-[2px]", SERIF)}>
        <Button className="w-[113px]">Parameters...</Button>
        <Button className="w-[117px]">Ranges...</Button>
        <Button className="w-[113px]">Online...</Button>
      </div>
      <div className="mt-px flex h-[34px] items-start">
        <div className="mt-[3px] ml-[3px] flex gap-[4px]">
          <Runner kind="plain" />
          <Runner kind="layer" />
          <Runner kind="frame" />
        </div>
        <div className={clsx("mt-[4px] ml-[2px] flex w-[162px] flex-col items-center leading-[15px] whitespace-pre", THIN)}>
          {check.time && (
            <>
              <span>13 Oct 2025</span>
              <span>{check.time}</span>
            </>
          )}
        </div>
        <div className={clsx("mt-[3px] ml-auto flex h-[30px] w-[30px] items-center justify-center", TUP)}>
          <svg width="24" height="24" viewBox="0 0 24 24">
            <path d="M1 1h22v22H1z" fill="none" stroke="#000" />
            <circle cx="10" cy="9" r="6.500" fill="none" stroke="#000" />
            <path d="M6.500 9h7M10 5.500v7" stroke="#000" />
            <path d="M14.500 14l6 6" stroke="#000" strokeWidth="3.500" />
          </svg>
        </div>
        <div
          className={clsx(
            "ml-[2px] flex h-[34px] w-[16px] items-center justify-center border border-r-0 border-black text-[14px] tracking-[-4px]",
            check.flag === "red" ? "bg-[#ff1a1a]" : "bg-[#1ae61a]"
          )}
        >
          {check.flag === "red" && <span className="pr-[4px] font-bold">!!</span>}
        </div>
      </div>
      <div
        className={clsx(
          "flex h-[23px] items-center border-t border-b-[3px] border-black bg-[#ffffce] pt-[3px] leading-[16px]",
          THIN,
          check.msg === "processed" ? "pl-[209px]" : "pl-[3px]"
        )}
      >
        {check.msg}
      </div>
    </div>
  );
}

function ChecklistEditor() {
  return (
    <div className="absolute top-[80px] left-[1656px] flex h-[719px] w-[384px] flex-col bg-[#9cdbdb] shadow-[0_1px_8px_rgba(0,0,0,0.5)]">
      <TitleBar title="Checklist Editor" className="h-[30px]" />
      <div className="flex h-[35px] shrink-0">
        <div className="flex w-[138px] border border-black">
          <div className={clsx("flex w-full items-center pl-[12px]", UP, SERIF)}>
            <MenuItem text="File" className="w-[42px]" />
            <MenuItem text="Edit" className="w-[41px]" />
            <MenuItem text="Run" />
          </div>
        </div>
      </div>
      <div className={clsx("flex h-[21px] shrink-0 items-center justify-center border border-black", SERIF)}>fp-checklist</div>
      <div className="flex h-[604px] shrink-0 bg-[#53cfb0]">
        <div className="flex w-[365px] flex-col border-t-[3px] border-r-[3px] border-b-2 border-l-2 border-t-[#2a7966] border-r-[#a9eedd] border-b-[#a9eedd] border-l-[#2a7966] pt-[1px]">
          {checks.map((c, i) => (
            <CheckCard key={i} check={c} />
          ))}
        </div>
        <VScroll className="ml-[2px]" thumb="h-[408px]" />
      </div>
      <Button className="mx-[1px] mt-[3px] h-[24px]" />
    </div>
  );
}

function Radio({ label, checked }: { label: string; checked?: boolean }) {
  return (
    <div className="flex h-[27px] items-center gap-[5px] pl-[5px]">
      <svg width="14" height="14" viewBox="0 0 14 14">
        <path d="M7 1l6 6l-6 6l-6-6z" fill={checked ? "#c8105a" : "#9cdbdb"} />
        <path d="M1 7l6-6l6 6" fill="none" stroke={checked ? "#4f8484" : "#cdf6f4"} strokeWidth="1.800" />
        <path d="M1 7l6 6l6-6" fill="none" stroke={checked ? "#cdf6f4" : "#4f8484"} strokeWidth="1.800" />
      </svg>
      {label}
    </div>
  );
}

function Histogram() {
  return (
    <div className="absolute top-[444px] left-[1465px] flex h-[569px] w-[467px] flex-col bg-[#53cfb0] shadow-[0_4px_10px_rgba(0,0,0,0.45)]">
      <TitleBar title="Results histogram" className="h-[30px]" />
      <div className="flex h-[292px] shrink-0 border border-b-2 border-black border-b-[#2a7966] pt-[4px] pl-[3px]">
        <div className="flex w-[103px] shrink-0 flex-col border border-black bg-[#9cdbdb]">
          <div className="flex h-[137px] flex-col border-r border-b border-black pt-px">
            <Radio label="Count" />
            <Radio label="Average" />
            <Radio label="Sum" />
            <Radio label="Min" checked />
            <Radio label="Max" />
          </div>
          <div className="mt-[1px] flex h-[115px] gap-[3px]">
            <div className={clsx("w-[83px] pt-[2px] pl-[3px]", DOWN)}>
              <div className="h-[15px] w-[72px] bg-black leading-[16px] text-[#9cdbdb]">Spacing</div>
            </div>
            <VScroll thumb="h-[87px]" aqua />
          </div>
          <div className="mt-[1px] flex gap-[4px] pl-[2px]">
            <BadgeButton label="DEL" className="h-[29px] w-[30px]" />
            <BadgeButton label="REF" className="h-[29px] w-[30px]" />
          </div>
        </div>

        <div className="ml-[1px] flex w-[354px] flex-col border border-black bg-[#9cdbdb]">
          <div className="mt-[4px] ml-[46px] flex h-[21px] w-[259px] shrink-0 items-center justify-center border border-black bg-[#b4ffff] pt-[4px] leading-[16px] whitespace-pre italic shadow-[2px_2px_0_#708c8c]">
            Size(Spacing) / Min(Spacing)
          </div>
          <div className="flex h-[144px] shrink-0 items-end border-b-4 border-black pl-[6px]">
            {bars.map((b, i) => (
              <div key={b.value} className="flex w-[55px] flex-col items-center">
                <span className={clsx("-mb-[1px] leading-[16px]", i === 0 && "text-[#e01818]")}>{b.value}</span>
                <div className={clsx("-mr-px w-[56px] border border-b-0 border-black", b.color)} style={{ height: b.h }} />
              </div>
            ))}
          </div>
          <div className="mt-[1px] flex h-[30px] shrink-0 pl-[6px]">
            {bars.map((b) => (
              <div key={b.from} className={clsx("-mr-px flex w-[56px] flex-col border border-black pt-[1px] pl-[17px] leading-[15px]", b.color)}>
                <span>{b.from}</span>
                <span className="pl-[9px]">{b.to}</span>
              </div>
            ))}
          </div>
          <HScroll className="mt-[6px] w-full" thumb="w-[249px]" aqua />
          <div className="flex h-[61px] border-t-2 border-black">
            <div className={clsx("flex w-[76px] flex-col gap-[3px] pt-[1px] pl-[3px]", DOWN)}>
              <div className="h-[15px] w-[64px] shrink-0 bg-black leading-[16px] text-[#9cdbdb]">Spacing</div>
              <div className="h-[15px] shrink-0 leading-[16px]">Pad</div>
              <div className="h-[15px] shrink-0 leading-[16px]">Circuit</div>
            </div>
            <VScroll className="ml-[2px]" thumb="h-[31px]" aqua />
            <div className="flex flex-1 flex-col border-2 border-t-0 border-black">
              <span className="mt-[2px] text-center leading-[16px]">Resolution</span>
              <span className="mt-[6px] ml-[26px] leading-[16px]">1.0</span>
              <div className={clsx("mx-[2px] mt-[1px] flex h-[16px] shrink-0 pl-[20px]", DOWN, "!bg-[#84b8b8]")}>
                <Button className="w-[15px]" />
                <Button className="w-[15px]" />
              </div>
            </div>
          </div>
        </div>
      </div>

      <div className="flex h-[7px] shrink-0 items-center justify-end border-x border-black pr-[10px]">
        <div className="h-px flex-1 bg-[#2a7966]" />
        <div className={clsx("h-[8px] w-[9px]", TUP)} />
      </div>
      <div className="ml-[4px] flex h-[167px] w-[460px] shrink-0 border-2 border-t-[#2a7966] border-r-[#a9eedd] border-b-[#a9eedd] border-l-[#2a7966]">
        <svg width="456" height="163" viewBox="1471 775 456 163">
          <rect x="1471.500" y="775.500" width="455" height="162" fill="none" stroke="#000" />
          <path
            d="M1577 827L1579 825H1643L1645 822V806L1649 802H1707L1710 805H1715L1718 802H1769.500V797H1804.500V800L1807 802H1815L1819 806V900L1816 903H1771L1768 895L1765 893H1757L1754 896L1751 903H1649L1645 899V894L1642 890H1637L1634 893V917H1579L1577 915z"
            fill="#9cdbdb"
            stroke="#000"
            strokeWidth="2"
          />
          <rect x="1782.500" y="807.500" width="29" height="16" fill="none" stroke="#000" strokeDasharray="5 3" />
          <rect x="1795" y="813" width="3" height="3" fill="#e01ae0" />
        </svg>
      </div>
      <div className="flex h-[46px] shrink-0 items-start border-x border-b border-black pl-[5px]">
        <BadgeButton label="DEL" className="mt-[2px] h-[38px] w-[30px]" />
        <BadgeButton label="REF" className="mt-[2px] ml-[4px] h-[38px] w-[30px]" />
        <div className="ml-[2px] flex h-[42px] w-[307px] items-center border border-black bg-[#9cdbdb] pt-[1px] pl-[2px]">
          2165 measurements for 4 layers
        </div>
        <Button className="mt-[2px] ml-[2px] h-[38px] w-[38px]">
          <svg width="30" height="30" viewBox="0 0 30 30">
            <path d="M.5.500h29v29H.500z" fill="none" stroke="#000" />
            <path d="M4 4h12v12H4z" fill="#fff" stroke="#1020e0" strokeWidth="2.500" />
            <path d="M5.500 14.500v-6l2.500 2l2-2l1.500 2l1.500-4h1.500v8z" fill="#e01030" />
            <path d="M19 19h7v7h-7z" fill="none" stroke="#1020e0" strokeWidth="2" />
            <path d="M18 7h7v9M22.500 13l2.500 3l2.500-3" fill="none" stroke="#000" />
          </svg>
        </Button>
        <Button className="mt-[2px] ml-[4px] h-[38px] w-[38px]">
          <svg width="30" height="30" viewBox="0 0 30 30">
            <path d="M.5.500h29v29H.500z" fill="none" stroke="#000" />
            <path d="M4 4h12v12H4z" fill="#fff" stroke="#1020e0" strokeWidth="2.500" />
            <path d="M5.500 14.500v-6l2.500 2l2-2l1.500 2l1.500-4h1.500v8z" fill="#e01030" />
            <path d="M19 19h7v7h-7z" fill="none" stroke="#1020e0" strokeWidth="2" />
            <path d="M17 25H7v-5M4.500 22.500L7 19.500l2.500 3" fill="none" stroke="#000" />
          </svg>
        </Button>
      </div>
      <div className="flex flex-1 bg-[#9cdbdb] p-[1px]">
        <Button className="h-[25px] w-full pt-[2px]">Close</Button>
      </div>
    </div>
  );
}

function TaskIcon({ kind }: { kind: string }) {
  return (
    <svg width="20" height="20" viewBox="0 0 20 20" className="shrink-0">
      {kind === "calc" && <path d="M1 0h17v20H1z" fill="#6a7f8c" />}
      {kind === "calc" && <path d="M3 2h13v5H3z" fill="#5fd4f4" />}
      {kind === "note" && <path d="M1 0h18v20H1z" fill="#e8f4fc" />}
      {kind === "note" && <path d="M1 2h18M4 6h12M4 9h12" stroke="#4aa0d8" strokeWidth="2" />}
      {kind === "disk" && <path d="M0 0h20v20H0z" fill="#2848c8" />}
      {kind === "disk" && <path d="M4 0h11v8H4z" fill="#dfe6ff" />}
      {kind === "green" && <path d="M0 1h14M5 6h14M0 11h14" stroke="#12a050" strokeWidth="4" />}
      {kind === "red" && <path d="M2 14q2-8 9-7t6-6" fill="none" stroke="#e02818" strokeWidth="5" />}
      {kind === "bird" && <rect width="20" height="20" rx="4" fill="#18a0f8" />}
      {kind === "bird" && <path d="M3 4l13 5l-8 8z" fill="#fff" />}
      {kind === "globe" && <path d="M3 1h15v14H1z" fill="none" stroke="#188040" strokeWidth="2" />}
      {kind === "globe" && <circle cx="11" cy="10" r="6" fill="#20a058" />}
      {kind === "shell" && <path d="M1 12q0-9 9-11q9 2 9 11z" fill="#f4d488" />}
      {kind === "teal" && <path d="M1 2l8 3l9 2l2 7l-9-1l-6-3z" fill="#108080" />}
      {kind === "win" && <path d="M0 0h20v20H0z" fill="#f4f4f4" />}
      {kind === "win" && <path d="M0 0h20v6H0z" fill="#0a1a80" stroke="#ccc" />}
      {kind === "xls" && <path d="M5 0h9l5 5v15H5z" fill="#e4ecf4" />}
      {kind === "xls" && <path d="M1 2h12v10H1z" fill="#fff" stroke="#1f9a3c" />}
      {kind === "xls" && <path d="M4 4l6 6M10 4l-6 6" fill="none" stroke="#1f9a3c" strokeWidth="2.200" />}
    </svg>
  );
}

function Taskbar() {
  return (
    <div className="flex h-[17px] shrink-0 items-start overflow-hidden bg-[#111] font-['Noto_Sans','Noto_Sans_CJK_SC',sans-serif] text-[12.500px] font-normal tracking-normal text-white [-webkit-text-stroke:0]">
      <svg width="60" height="17" viewBox="0 0 60 17" className="shrink-0">
        <path d="M17 14l6-1v4h-6zM24 13l8-1v5h-8z" fill="#fff" />
        <path d="M54.500 3v14M57.500 3v14" stroke="#444" />
      </svg>
      <div className="ml-[16px] flex">
        {tasks.map((t, i) => (
          <div key={i} className={clsx("flex h-[17px] w-[75.600px] items-start overflow-hidden pl-[5px]", t.active && "bg-[#383838]")}>
            <div className="mt-[9px] shrink-0">
              <TaskIcon kind={t.icon} />
            </div>
            <span className="mt-[10px] ml-[6px] leading-[18px] whitespace-nowrap">{t.label}</span>
          </div>
        ))}
      </div>
      <div className="ml-[34px] text-[13px] leading-[18px]">8%</div>
      <svg width="120" height="17" viewBox="0 0 120 17" className="ml-[30px] shrink-0">
        <path d="M6 17l4-3l4 3" fill="none" stroke="#ccc" />
        <path d="M22 12l7 5M37 12l-7 5" stroke="#b030b0" strokeWidth="3" />
        <path d="M54 11v6M48 15h12" stroke="#fff" strokeWidth="1.500" />
        <path d="M76 15l12-4v6H76z" fill="#20c040" />
      </svg>
      <div className="ml-auto text-[13px] leading-[18px]">21:43</div>
      <svg width="74" height="17" viewBox="0 0 74 17" className="shrink-0">
        <path d="M33 13h15v4M33 17v-4" fill="none" stroke="#fff" strokeWidth="2" />
        <path d="M69.500 0v17" stroke="#555" />
      </svg>
    </div>
  );
}

export default function App() {
  return (
    <main className="relative flex h-[1129px] w-[2048px] flex-col overflow-hidden bg-linear-to-r from-[#00a6ee] to-[#0846b4] font-['Liberation_Mono',monospace] text-[16px] font-normal tracking-[-0.63px] text-black [-webkit-text-stroke:0.4px]">
      <div className="flex h-[1105px] shrink-0 bg-[#00a6ee] pl-[8px]">
        <div className="flex w-[2040px] flex-col">
          <Header />
          <div className="flex h-[958px] shrink-0">
            <LayerPanel />
            <div className="relative w-[1883px]">
              <Board />
              <div className={clsx("absolute right-0 bottom-0 h-[45px] w-[156px] pt-[8px] pl-[2px] leading-[15px] whitespace-pre", TUP)}>
                {'X = 1.572125"\nY = 1.329611"'}
              </div>
            </div>
          </div>
          <div className="h-[3px] shrink-0 bg-black" />
          <CommandBar />
          <div className="h-[2px] shrink-0 bg-black" />
          <div className="flex h-[31px] flex-col border-t-2 border-b-2 border-l-2 border-t-[#6f9a9a] border-b-[#e4ffff] border-l-[#6f9a9a]">
            <div className="flex flex-1 border-y border-l border-black bg-[#b4ffff] pb-[2px]">
              <div
                className={clsx(
                  "flex flex-1 items-center justify-center border-t-4 border-b-2 border-l-4 border-t-[#d4ffff] border-b-[#6f9a9a] border-l-[#d4ffff] pr-[22px] leading-[16px]",
                  SMALL
                )}
              >
                ss.d -&gt; ss : 0.0008858
              </div>
            </div>
          </div>
        </div>
      </div>
      <div className="h-[7px] shrink-0" />
      <Taskbar />

      <ChecklistEditor />
      <ResultsViewer />
      <Histogram />
    </main>
  );
}
